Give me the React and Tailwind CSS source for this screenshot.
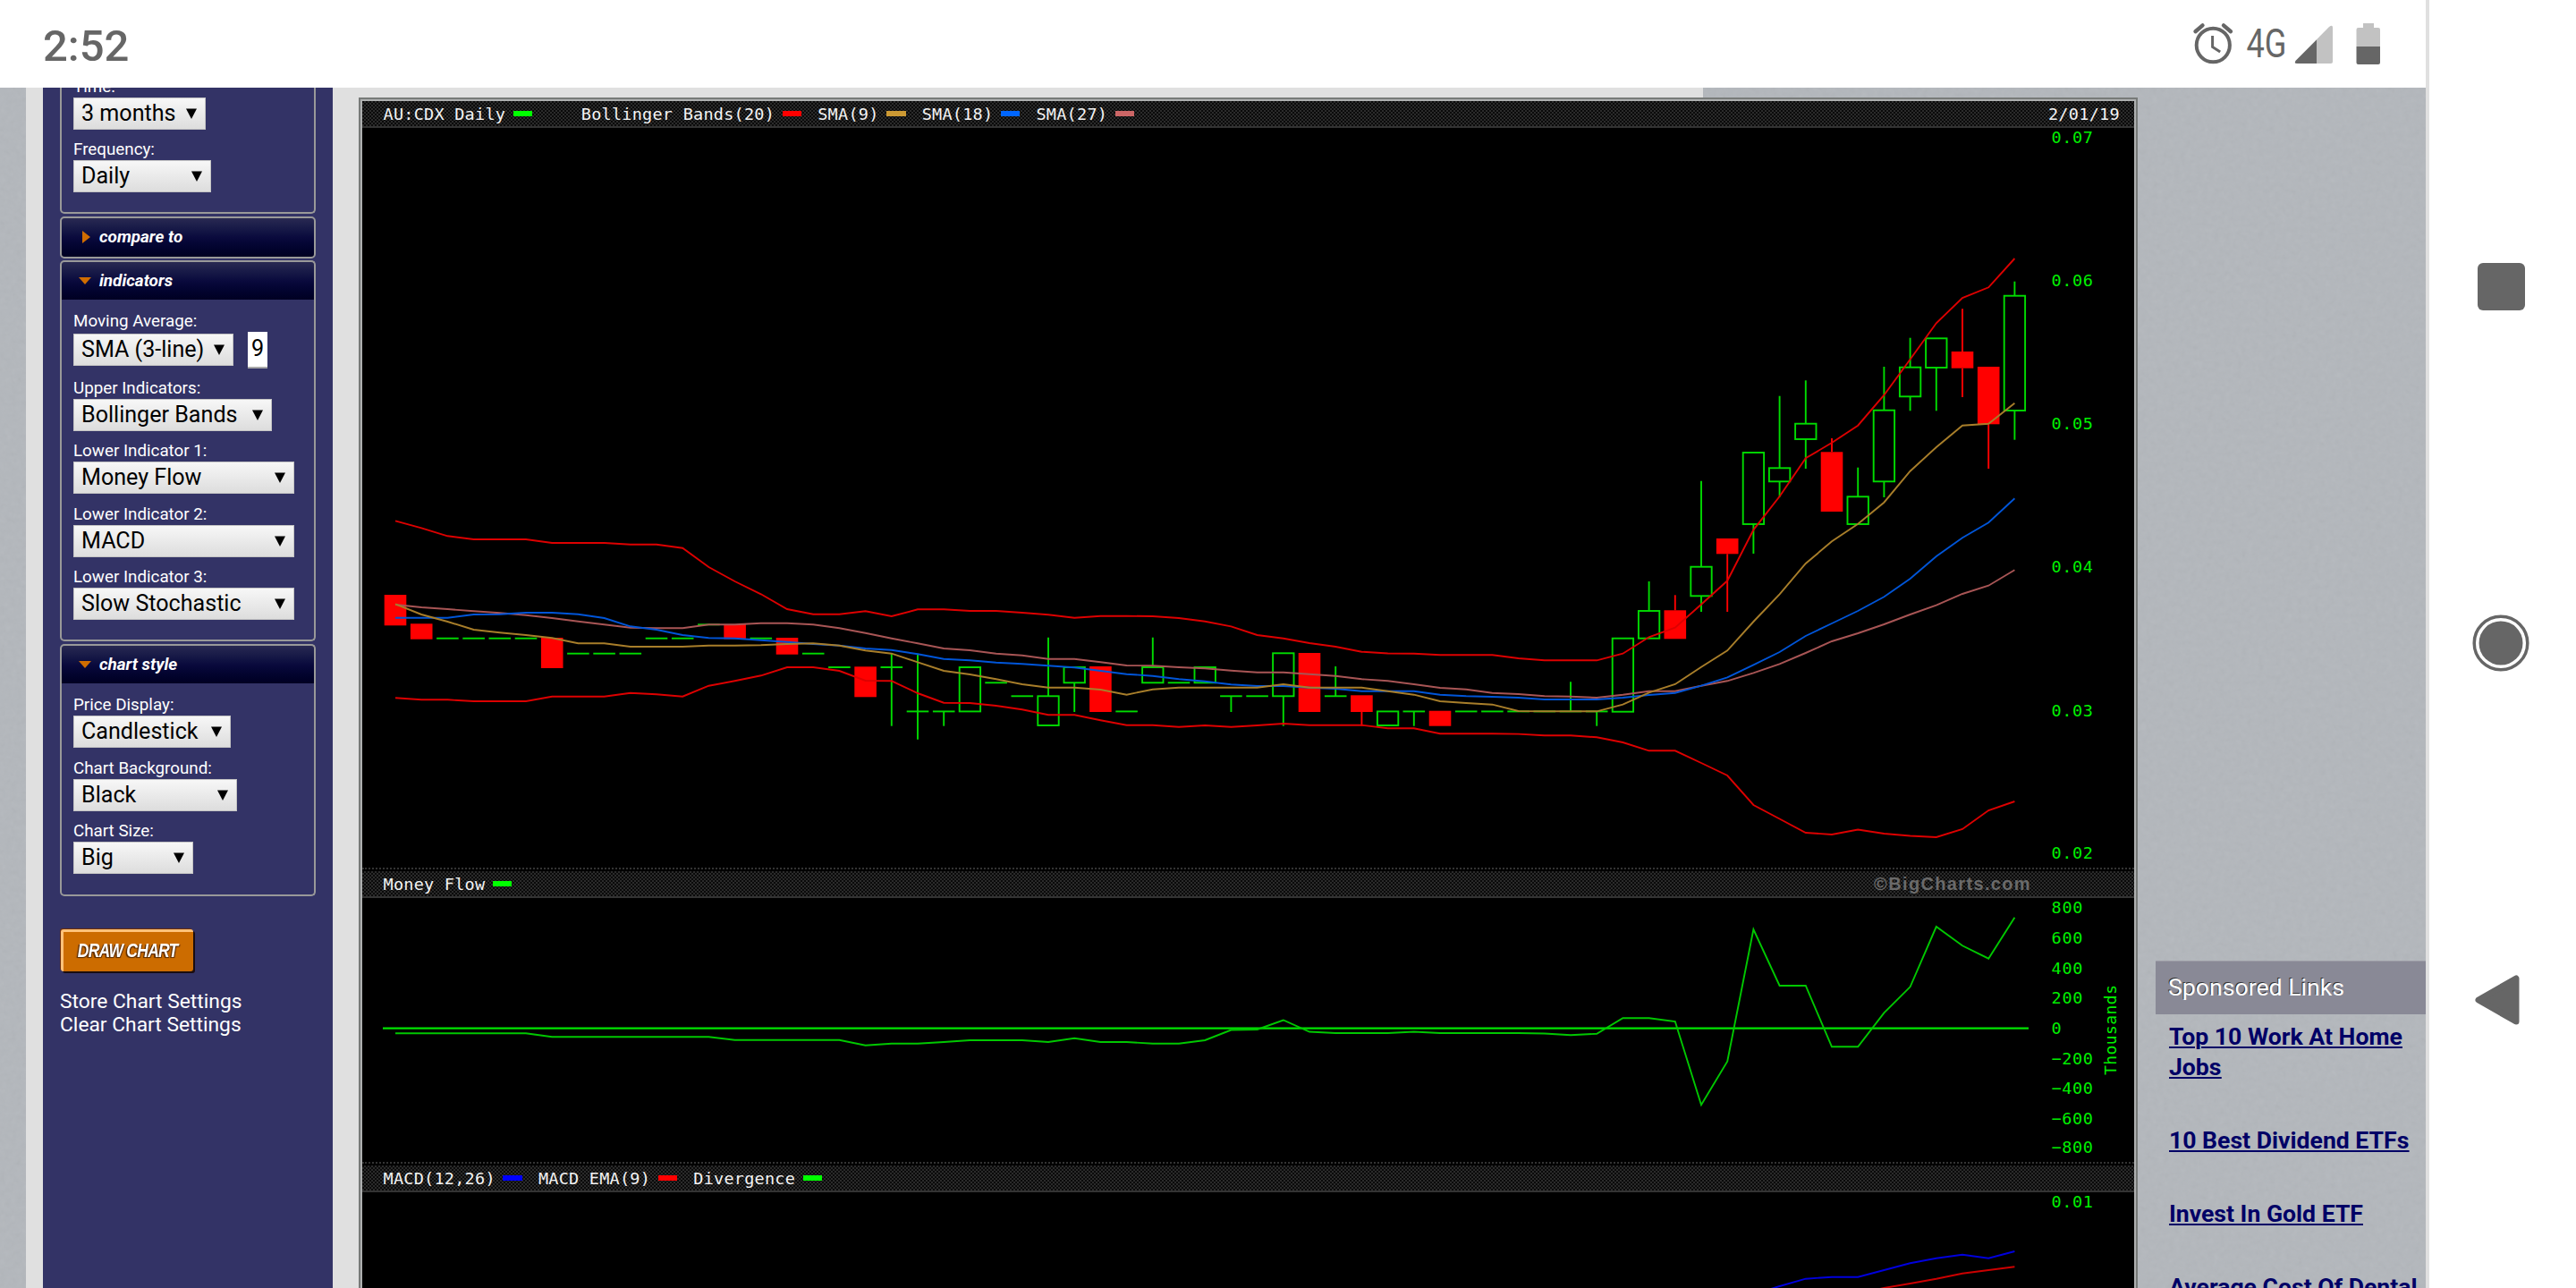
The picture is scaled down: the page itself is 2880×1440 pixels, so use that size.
const PITCH = 29.2
const FIRST_X = 442
const xAt = (i) => FIRST_X + i * PITCH

// candle: [kind, top, bottom, wickTop, wickBottom], kind is 'u' up, 'd' down, 'f' flat
const CANDLES = [
  ['d', 665, 699.3], ['d', 697.3, 714.7], ['f', 713.7], ['f', 713.7], ['f', 713.7],
  ['f', 713.7], ['d', 713, 747], ['f', 730.7], ['f', 730.7], ['f', 730.7],
  ['f', 713.7], ['f', 713.7], ['f', 698.3], ['d', 698, 714.5], ['f', 713.7],
  ['d', 713, 731.7], ['f', 730.7], ['f', 746], ['d', 745.3, 779.3], ['f', 746, 746, 730.7, 811.7],
  ['f', 795.4, 795.4, 730.7, 826.7], ['f', 795.4, 795.4, 795.4, 811.7], ['u', 746, 795.4], ['f', 763.3], ['f', 778.3],
  ['u', 778.3, 811, 712.7, 778], ['u', 746, 763.3, 763, 796], ['d', 745, 796], ['f', 795.4], ['u', 746, 763.3, 712.7, 746],
  ['f', 763.3], ['u', 746, 763.3], ['f', 778.3, 778.3, 778.3, 796], ['f', 778.3], ['u', 730.3, 778.3, 778.3, 811.7],
  ['d', 730, 796], ['f', 778.3, 778.3, 745, 778.3], ['d', 777.3, 796, 796, 811.7], ['u', 795.4, 811], ['f', 795.4, 795.4, 795.4, 811.7],
  ['d', 794.7, 811.7], ['f', 795.4], ['f', 795.4], ['f', 795.4], ['f', 795.4],
  ['f', 795.4, 795.4, 762.3, 795.4], ['f', 795.4, 795.4, 795.4, 811.7], ['u', 713.7, 795.7], ['u', 683, 713.7, 650, 683], ['d', 682.3, 714.3, 665.3, 683],
  ['u', 633.7, 666.3, 537.7, 684], ['d', 602, 619.3, 619, 684], ['u', 506, 586, 586, 619], ['u', 523.3, 538.3, 442.7, 555.7], ['u', 473.7, 491, 425.3, 524],
  ['d', 505.3, 572, 490, 506], ['u', 555.3, 586, 522.7, 555], ['u', 458.7, 538.3, 410, 556], ['u', 410.7, 443.3, 377.7, 459.3], ['u', 378.3, 411, 411, 459.3],
  ['d', 393, 411.7, 345.3, 444], ['d', 410, 474.3, 474, 524], ['u', 330.7, 459, 314.7, 491.7],
]

const UPPER = [
  582.3, 590.3, 599.3, 603, 603, 603, 607, 607, 607, 608.7, 608.7, 612.7, 634, 650, 664.3, 681, 686.7, 686.7, 683.3, 689,
  681.3, 681.3, 683, 683, 685, 687.3, 690.7, 688.7, 688.7, 689, 691, 694.7, 700.3, 710, 713.7, 719, 723, 728.7, 730.5, 730.7,
  732.3, 732.3, 732.3, 736, 738.3, 738.3, 738.3, 730.7, 712.3, 701.7, 675.7, 649.3, 592.3, 555, 512.3, 495, 475.7, 441.7, 401.7, 361.3,
  333, 321.3, 289,
]
const LOWER = [
  780.3, 782.3, 782.3, 784, 784, 784, 778.7, 778.7, 778.7, 774.7, 776.3, 778.7, 766.7, 761.3, 755.3, 746, 746, 750, 761, 761.3,
  775, 785.7, 786, 789, 793.3, 799.3, 799.3, 805.3, 810.7, 810.7, 812.7, 811, 812.7, 811, 809, 810.7, 810.7, 810.7, 814.3, 814.3,
  820.3, 820.3, 820.3, 820.6, 822.3, 822.3, 824.3, 830, 839.3, 839.3, 853, 867, 900, 915.5, 931, 933, 927.5, 932, 934.5, 936,
  927, 906, 896,
]
const SMA9 = [
  675.3, 687, 695, 704, 707.3, 710, 713.3, 719.3, 719.3, 723, 723, 723, 721.7, 721.7, 721.3, 720, 719.3, 721.7, 727.3, 730.7,
  740.3, 750, 754, 759.3, 765, 768.7, 768.7, 771, 776.7, 770.7, 768.7, 768.7, 768.7, 768.7, 765, 768.7, 768.7, 768.7, 772.7, 776.7,
  784, 786, 787.7, 795, 795.3, 795.3, 795.3, 787.7, 774.3, 765, 745.7, 727.3, 695, 664.3, 630, 605.3, 585.7, 561.7, 526.7, 500,
  475.7, 473.7, 450.7,
]
const SMA18 = [
  690.7, 690.7, 690.7, 687, 686.7, 685, 685, 686.7, 691, 700.3, 704, 710, 713.3, 713.7, 715.7, 717.7, 720, 721.7, 725, 726.7,
  731.3, 736.7, 738.3, 740.7, 742.3, 744.3, 746.3, 750, 753.7, 755.7, 759.3, 761.7, 765.3, 767, 767, 768.7, 770, 772.7, 772.7, 772.7,
  776.7, 778.3, 779, 780, 782, 782, 782, 780, 777, 774.7, 766.7, 757.3, 743.3, 729, 711, 697, 683, 667.3, 647, 622,
  601.3, 584.3, 557.3,
]
const SMA27 = [
  676, 679, 681, 683.3, 685.3, 687.7, 691, 694.7, 698.3, 701.7, 702.3, 702.3, 698.3, 698.3, 696.7, 696.7, 698.3, 702.3, 707.7, 713.7,
  719.3, 725, 727, 730.7, 732.7, 736.7, 736.7, 740.3, 744, 744.3, 746, 747.3, 749.7, 751.7, 751.7, 753.7, 755.7, 759.3, 761.3, 765,
  769, 770.7, 774.7, 776, 778.3, 778.7, 780, 776.7, 772.7, 772.7, 766.7, 761.3, 752.3, 742.3, 730, 717, 708, 698, 687, 676.7,
  664, 654.7, 637.3,
]
const FLOW = [
  1155.3, 1155.3, 1155.3, 1155.3, 1155.3, 1155.3, 1159.3, 1159.3, 1159.3, 1159.3, 1159.3, 1159.3, 1159.3, 1162.7, 1162.7, 1162.7, 1162.7, 1162.7, 1168.7, 1166.7,
  1166.7, 1165, 1163, 1163, 1163, 1165, 1160.7, 1165, 1165, 1166.7, 1166.7, 1163, 1151.5, 1151, 1140.5, 1153.5, 1155, 1155, 1155, 1153.5,
  1155, 1155, 1155, 1155, 1155.5, 1157.3, 1155.7, 1138.3, 1138.3, 1142, 1235.3, 1186.7, 1039, 1102, 1102, 1170.3, 1170.3, 1132.3, 1103.3, 1036,
  1057.3, 1071.7, 1025.7,
]
const MACD = [1447, 1438, 1429.7, 1427.7, 1427.7, 1420, 1412.3, 1406.7, 1402.7, 1406.7, 1399]
const MACD_EMA = [1446, 1440, 1435, 1429.7, 1423.7, 1420, 1416.3]

function Line({ data, from = 0, color }) {
  const points = data.map((y, i) => `${xAt(from + i).toFixed(1)},${y}`).join(' ')
  return <polyline points={points} fill="none" stroke={color} strokeWidth="1.9" />
}

function Candle({ i, data }) {
  const [kind, top, bottom, wickTop, wickBottom] = data
  const x = xAt(i)
  const color = kind === 'd' ? '#f00' : '#00dc00'
  // upper and lower wick are drawn apart so that hollow bodies stay empty
  const upper = wickTop !== undefined && wickTop < top
  const lower = wickBottom !== undefined && wickBottom > (bottom ?? top)
  return (
    <g stroke={color} strokeWidth="1.9" fill="none">
      {upper && <line x1={x} x2={x} y1={wickTop} y2={top} />}
      {lower && <line x1={x} x2={x} y1={bottom} y2={wickBottom} />}
      {kind === 'f' && <line x1={x - 12.3} x2={x + 12.3} y1={top} y2={top} />}
      {kind === 'u' && <rect x={x - 11.7} y={top} width="23.4" height={bottom - top} />}
      {kind === 'd' && <rect x={x - 12.3} y={top} width="24.6" height={bottom - top} fill="#f00" stroke="none" />}
    </g>
  )
}

function AxisLabels({ items }) {
  return items.map(([text, y]) => (
    <text
      key={text}
      x="2293.6"
      y={y - 0.5}
      fill="#00f000"
      fontSize="18.5"
      fontFamily="DejaVu Sans Mono, monospace"
      textLength={text.length * 11.6}
    >
      {text}
    </text>
  ))
}

const PRICE_AXIS = [
  ['0.07', 160.7], ['0.06', 320.7], ['0.05', 480.3], ['0.04', 640.5], ['0.03', 801], ['0.02', 960.7],
]
const FLOW_AXIS = [
  ['800', 1021], ['600', 1055], ['400', 1089], ['200', 1122], ['0', 1156],
  ['−200', 1190], ['−400', 1223], ['−600', 1257], ['−800', 1289.5],
]

function Legend({ items, first }) {
  return (
    <div className="flex items-center">
      {items.map(([text, swatch], i) => (
        <div key={text} className={i === 1 && first ? 'ml-[54.5px] flex items-center' : i ? 'ml-[18px] flex items-center' : 'flex items-center'}>
          <span className="whitespace-pre pt-px font-['DejaVu_Sans_Mono',monospace] text-[18.5px] leading-[27px] tracking-[0.25px] text-[#f4f4f4]">{text}</span>
          <span className={`ml-[8.6px] h-[6.5px] w-[21.5px] ${swatch}`} />
        </div>
      ))}
    </div>
  )
}

function PanelBar({ children }) {
  return (
    <div className="flex h-[30px] shrink-0 items-center justify-between border-b-2 border-[#333] bg-[repeating-conic-gradient(#2b2b2b_0_25%,#0a0a0a_0_50%)] bg-[length:4px_4px] pl-[23.5px]">
      {children}
    </div>
  )
}

function Divider() {
  return <div className="h-1 shrink-0 border-t-2 border-dotted border-[#333] bg-black" />
}

function Chart() {
  return (
    <div className="flex h-[1340px] w-[1989px] shrink-0 flex-col border-2 border-[#777a78]">
      <div className="flex flex-1 flex-col border-2 border-[#aeb0b0] bg-black">
        <PanelBar>
          <Legend
            first
            items={[
              ['AU:CDX Daily', 'bg-[#00ff00]'],
              ['Bollinger Bands(20)', 'bg-[#ff0000]'],
              ['SMA(9)', 'bg-[#cc9933]'],
              ['SMA(18)', 'bg-[#0066ff]'],
              ['SMA(27)', 'bg-[#cc6666]'],
            ]}
          />
          <span className="mr-[16px] pt-px font-['DejaVu_Sans_Mono',monospace] text-[18.5px] leading-[27px] tracking-[0.3px] text-[#f4f4f4]">2/01/19</span>
        </PanelBar>
        <svg className="block h-[827px] w-[1981px] shrink-0" viewBox="405 143 1981 827">
          {CANDLES.map((c, i) => <Candle key={i} i={i} data={c} />)}
          <Line data={UPPER} color="#dd0000" />
          <Line data={LOWER} color="#dd0000" />
          <Line data={SMA27} color="#a85555" />
          <Line data={SMA18} color="#0055d8" />
          <Line data={SMA9} color="#a87e2a" />
          <AxisLabels items={PRICE_AXIS} />
        </svg>
        <Divider />
        <PanelBar>
          <Legend items={[['Money Flow', 'bg-[#00ff00]']]} />
          <span className="mr-[115px] font-['Liberation_Sans',sans-serif] text-[20px] font-bold leading-[28px] tracking-[1.35px] text-[#6a6a6a]">©BigCharts.com</span>
        </PanelBar>
        <svg className="block h-[295px] w-[1981px] shrink-0" viewBox="405 1004 1981 295">
          <line x1="428" x2="2268" y1="1149.7" y2="1149.7" stroke="#00e400" strokeWidth="2.2" />
          <Line data={FLOW} color="#00c800" />
          <AxisLabels items={FLOW_AXIS} />
          <text
            transform="translate(2366 1202) rotate(-90)"
            fill="#00f000"
            fontSize="18"
            fontFamily="DejaVu Sans Mono, monospace"
            textLength="101"
          >
            Thousands
          </text>
        </svg>
        <Divider />
        <PanelBar>
          <Legend
            items={[
              ['MACD(12,26)', 'bg-[#0000ff]'],
              ['MACD EMA(9)', 'bg-[#ff0000]'],
              ['Divergence', 'bg-[#00ff00]'],
            ]}
          />
        </PanelBar>
        <svg className="block h-[112px] w-[1981px] shrink-0" viewBox="405 1333 1981 112">
          <Line data={MACD} from={52} color="#0000dd" />
          <Line data={MACD_EMA} from={56} color="#cc0000" />
          <AxisLabels items={[['0.01', 1350.6]]} />
        </svg>
      </div>
    </div>
  )
}

function Field({ label, value, width, labelGap = 'pb-px', children }) {
  return (
    <div>
      <div className={`flex h-[34.33px] items-end text-[18.8px] leading-[22px] text-white ${labelGap}`}>{label}</div>
      <div className="flex items-center">
        <div className={`flex h-9 items-center justify-between border border-[#c4c4c4] bg-linear-to-b from-[#f7f7f7] to-[#dddddd] pl-[8px] pr-[9px] ${width}`}>
          <span className="whitespace-nowrap text-[25.1px] leading-[34px] text-black">{value}</span>
          <svg className="h-[12px] w-[12px]" viewBox="0 0 12 12">
            <path d="M0 0.5h12L6 12z" fill="#000" />
          </svg>
        </div>
        {children}
      </div>
    </div>
  )
}

function PanelHeader({ title, open }) {
  return (
    <div className={`flex items-center border-2 border-[#999] bg-linear-to-b from-[#292952] via-[#0a0a3d] via-50% to-[#000022] ${open ? 'h-[44px] rounded-t-[5px] border-b-0' : 'h-[47px] rounded-[5px]'}`}>
      <span className="flex w-[42px] justify-center pl-[10px]">
        {open ? (
          <svg className="h-[8px] w-[14px]" viewBox="0 0 14 8"><path d="M0 0h14L7 8z" fill="#d06d00" /></svg>
        ) : (
          <svg className="ml-[2px] h-[14px] w-[9px]" viewBox="0 0 9 14"><path d="M0 0v14l9-7z" fill="#d06d00" /></svg>
        )}
      </span>
      <span className="text-[18.9px] font-bold italic leading-[22px] text-white">{title}</span>
    </div>
  )
}

function Sidebar() {
  return (
    <aside className="flex h-full w-[324px] shrink-0 flex-col bg-[#333366] px-[19px]">
      <div className="flex h-[141px] flex-col justify-end rounded-b-[5px] border-2 border-t-0 border-[#999] pb-[22px] pl-[13px]">
        <Field label="Time:" value="3 months" width="w-[148px]" />
        <Field label="Frequency:" value="Daily" width="w-[154px]" />
      </div>
      <div className="mt-[2.5px]">
        <PanelHeader title="compare to" />
      </div>
      <div className="mt-[2px]">
        <PanelHeader title="indicators" open />
        <div className="h-[382.5px] rounded-b-[5px] border-2 border-t-0 border-[#999] pl-[13px] pt-[4.5px]">
          <Field label="Moving Average:" value="SMA (3-line)" width="w-[179px]" labelGap="pb-[3px]">
            <div className="-my-1 ml-4 flex h-[41px] w-[22px] items-center justify-center border-b-2 border-[#a9a9a9] bg-white text-[25.2px] leading-[34px] text-black">9</div>
          </Field>
          <div className="pt-[2.5px]">
            <Field label="Upper Indicators:" value="Bollinger Bands" width="w-[222px]" />
            <Field label="Lower Indicator 1:" value="Money Flow" width="w-[247px]" />
            <Field label="Lower Indicator 2:" value="MACD" width="w-[247px]" />
            <Field label="Lower Indicator 3:" value="Slow Stochastic" width="w-[247px]" />
          </div>
        </div>
      </div>
      <div className="mt-[2.5px]">
        <PanelHeader title="chart style" open />
        <div className="h-[238px] rounded-b-[5px] border-2 border-t-0 border-[#999] pl-[13px] pt-[2.5px]">
          <Field label="Price Display:" value="Candlestick" width="w-[176px]" />
          <Field label="Chart Background:" value="Black" width="w-[183px]" />
          <Field label="Chart Size:" value="Big" width="w-[134px]" />
        </div>
      </div>
      <button
        type="button"
        className="ml-px mt-[37.5px] flex h-[47px] w-[148px] items-center justify-center rounded-[3px] border-t-[3px] border-l-[3px] border-[#ffc27a] bg-[#cc6c00] pb-[2px] shadow-[2px_2px_0_#1a0d10,-1px_-1px_0_#6a2c08]"
      >
        <span className="-ml-[2px] origin-center scale-x-[0.78] whitespace-nowrap font-['Liberation_Sans',sans-serif] text-[22.5px] font-bold italic leading-none tracking-[-1px] text-white [text-shadow:-2px_1px_1px_#5a2c00,1px_1px_1px_#5a2c00]">
          DRAW CHART
        </span>
      </button>
      <div className="mt-[21px] flex flex-col whitespace-nowrap text-[22.8px] leading-[26px] text-white">
        <span>Store Chart Settings</span>
        <span>Clear Chart Settings</span>
      </div>
    </aside>
  )
}

function SponsoredLinks() {
  return (
    <div className="mt-[976px] w-[302px]">
      <div className="flex h-[60px] items-center border-t border-[#9c9ca6] bg-[#898996] pb-[1px] pl-[14px] text-[26.67px] leading-none text-white [text-shadow:-1px_-1px_0_#333]">
        Sponsored Links
      </div>
      <div className="flex flex-col gap-[48px] whitespace-nowrap pl-[15px] pt-[8px] text-[26.6px] font-bold leading-[34px] text-[#000066] underline decoration-2 underline-offset-[2px]">
        <a>Top 10 Work At Home<br />Jobs</a>
        <a>10 Best Dividend ETFs</a>
        <a>Invest In Gold ETF</a>
        <a>Average Cost Of Dental</a>
      </div>
    </div>
  )
}

function StatusBar() {
  return (
    <header className="flex h-[98px] shrink-0 items-center justify-between bg-white pl-[48px] pr-[50px] text-[#666]">
      <span className="pt-[4px] text-[49px] font-medium leading-none">2:52</span>
      <svg className="h-[60px] w-[212px]" viewBox="2450 19 212 60">
        <g fill="none" stroke="#666">
          <ellipse cx="2474.3" cy="50.5" rx="18.6" ry="18.8" strokeWidth="4" />
          <path d="M2473.6 40v12.5l8.6 5.5" strokeWidth="3" />
          <path d="M2454.5 35.2l8-6.8M2494 35.2l-8-6.8" strokeWidth="4.4" strokeLinecap="round" />
        </g>
        <text x="2511.5" y="64" fontSize="43.5" fill="#666" fontFamily="Roboto, sans-serif" textLength="45" lengthAdjust="spacingAndGlyphs">4G</text>
        <path d="M2608 31v38q0 2-2 2h-37.500q-4.500 0-1.500-3.500L2604 30q4-3 4 1z" fill="#c2c2c2" />
        <path d="M2590 44.500V71h-21.500q-4.500 0-1.500-3.500z" fill="#666" />
        <path d="M2642 26h12v5h5q2 0 2 2v19h-26.500V33q0-2 2-2h5.500z" fill="#c2c2c2" />
        <path d="M2634.500 52H2661v18q0 2-2 2h-22.500q-2 0-2-2z" fill="#666" />
      </svg>
    </header>
  )
}

function NavBar() {
  return (
    <nav className="flex w-[168px] shrink-0 flex-col items-center border-l-4 border-[#e0e0e0] bg-white pr-[4px]">
      <div className="mt-[294px] h-[53px] w-[53px] rounded-[6px] bg-[#666]" />
      <svg className="mt-[340px] h-[64px] w-[64px]" viewBox="0 0 64 64">
        <circle cx="32" cy="32" r="29.8" fill="none" stroke="#666" strokeWidth="3.5" />
        <circle cx="32" cy="32" r="24.500" fill="#666" />
      </svg>
      <svg className="mt-[339px] mr-[8px] h-[56px] w-[50px]" viewBox="0 0 50 56">
        <path d="M4 28L46 4v48z" fill="#666" stroke="#666" strokeWidth="7" strokeLinejoin="round" />
      </svg>
    </nav>
  )
}

export default function App() {
  return (
    <div className="flex h-[1440px] w-[2880px] overflow-hidden bg-white font-['Roboto',sans-serif]">
      <div className="flex w-[2712px] shrink-0 flex-col">
        <StatusBar />
        <main className="relative flex h-[1342px] shrink-0 overflow-hidden bg-[#b3b7bc] pl-[29px]">
          <svg className="absolute inset-0 h-full w-full opacity-[0.09]">
            <filter id="paper">
              <feTurbulence type="fractalNoise" baseFrequency="0.16" numOctaves="2" seed="4" />
              <feColorMatrix type="saturate" values="0" />
            </filter>
            <rect width="100%" height="100%" filter="url(#paper)" />
          </svg>
          <div className="relative flex h-full w-[1875px] shrink-0 bg-[#e0e0e0] pl-[19px]">
            <Sidebar />
            <div className="ml-[29px] mt-[11px]">
              <Chart />
            </div>
          </div>
          <div className="relative ml-[506px]">
            <SponsoredLinks />
          </div>
        </main>
      </div>
      <NavBar />
    </div>
  )
}
